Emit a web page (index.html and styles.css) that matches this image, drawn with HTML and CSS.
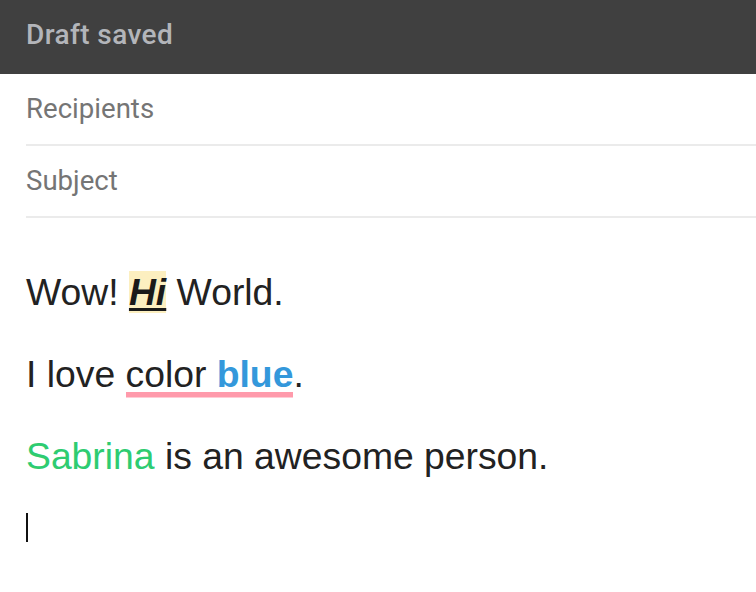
FILE: index.html
```html
<!DOCTYPE html>
<html>
<head>
<meta charset="utf-8">
<link rel="stylesheet" href="styles.css">
</head>
<body>
<header class="topbar">Draft saved</header>
<div class="field">Recipients</div>
<div class="field">Subject</div>
<div class="editor">
  <p class="para">Wow! <span class="hl">Hi</span> World.</p>
  <p class="para">I love <span class="squiggle">color <strong class="blue">blue</strong></span>.</p>
  <p class="para"><span class="green">Sabrina</span> is an awesome person.</p>
  <div class="caret-line"><span class="caret"></span></div>
</div>
</body>
</html>
```
FILE: styles.css
```css
html, body {
  margin: 0;
  padding: 0;
  background: #fff;
}
body {
  width: 756px;
  height: 592px;
  overflow: hidden;
}
.topbar {
  height: 74px;
  background: #404040;
  color: #b3b5ba;
  font-family: Roboto, "Liberation Sans", sans-serif;
  font-weight: 500;
  font-size: 28px;
  letter-spacing: 0.4px;
  display: flex;
  align-items: center;
  padding: 0 26px 6px;
  box-sizing: border-box;
}
.field {
  margin-left: 26px;
  height: 72px;
  box-sizing: border-box;
  border-bottom: 2px solid #ebebeb;
  color: #757575;
  font-family: Roboto, "Liberation Sans", sans-serif;
  font-size: 27.6px;
  display: flex;
  align-items: center;
  padding-bottom: 2px;
}
.editor {
  padding: 53px 26px 0;
  font-family: "Liberation Sans", Arial, sans-serif;
  font-size: 37.3px;
  color: #222;
}
.para {
  margin: 0 0 40px;
  line-height: 42px;
  white-space: nowrap;
}
.hl {
  background: #fcefc0;
  font-weight: bold;
  font-style: italic;
  text-decoration: underline;
  text-decoration-thickness: 3px;
  text-underline-offset: 3px;
  color: #1a1a1a;
}
.squiggle {
  padding-bottom: 2.6px;
  background-image: linear-gradient(#ff9aab, #ff9aab);
  background-repeat: no-repeat;
  background-size: 100% 5.5px;
  background-position: left bottom;
}
.blue {
  color: #3498db;
  font-weight: bold;
}
.green {
  color: #2ecc71;
}
.caret-line {
  margin-top: -4px;
  height: 29px;
}
.caret {
  display: block;
  width: 1.5px;
  height: 29px;
  background: #111;
}
```
